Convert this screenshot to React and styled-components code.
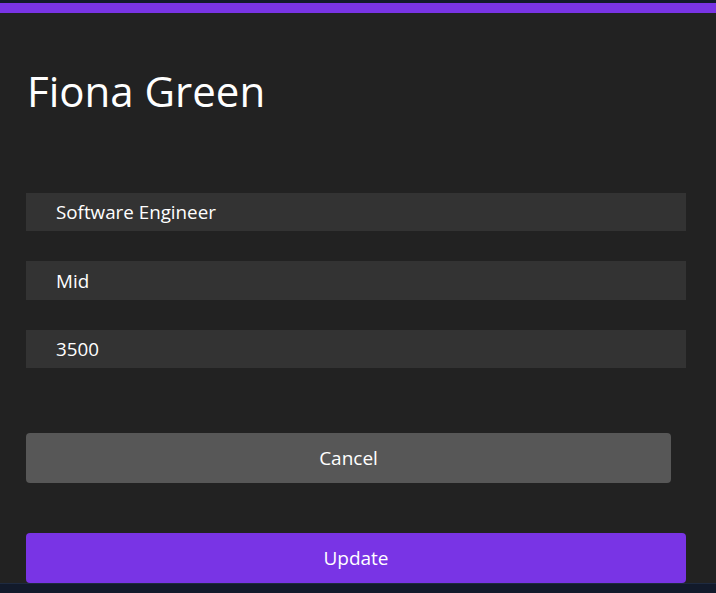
import React from 'react';
import styled, { createGlobalStyle } from 'styled-components';

const GlobalStyle = createGlobalStyle`
  html, body {
    margin: 0;
    padding: 0;
    background: #121a2b;
    font-family: "Open Sans", "Noto Sans", sans-serif;
  }
`

const Panel = styled.div`
  margin-top: 3px;
  border-top: 10px solid #7934e5;
  background: #222222;
  padding: 0 30px 0 26px;
  border-bottom: 1px solid #1e2a40;
`

const Title = styled.h1`
  margin: 0;
  padding: 50px 0 0 1px;
  font-size: 42px;
  font-weight: 400;
  line-height: 56px;
  color: #fff;
`

const Form = styled.form`
  display: flex;
  flex-direction: column;
  padding-top: 74px;
`

const Field = styled.input`
  box-sizing: border-box;
  width: 100%;
  height: 38.4px;
  margin-bottom: 30px;
  padding: 0 30px;
  border: none;
  outline: none;
  background: #333333;
  color: #fff;
  font-family: inherit;
  font-size: 18.8px;
`

const Button = styled.button`
  box-sizing: border-box;
  height: 50px;
  width: ${p => p.$full ? '100%' : 'calc(100% - 15px)'};
  margin-top: ${p => p.$gap}px;
  border: none;
  border-radius: 4px;
  background: ${p => p.$bg};
  color: #fff;
  font-family: inherit;
  font-size: 19px;
  cursor: pointer;
`

export default function App() {
  return (
    <>
      <GlobalStyle />
      <Panel>
        <Title>Fiona Green</Title>
        <Form onSubmit={e => e.preventDefault()}>
          <Field defaultValue="Software Engineer" />
          <Field defaultValue="Mid" />
          <Field defaultValue="3500" />
          <Button type="button" $bg="#575757" $gap={35}>Cancel</Button>
          <Button type="submit" $bg="#7934e5" $gap={50} $full>Update</Button>
        </Form>
      </Panel>
    </>
  )
}
